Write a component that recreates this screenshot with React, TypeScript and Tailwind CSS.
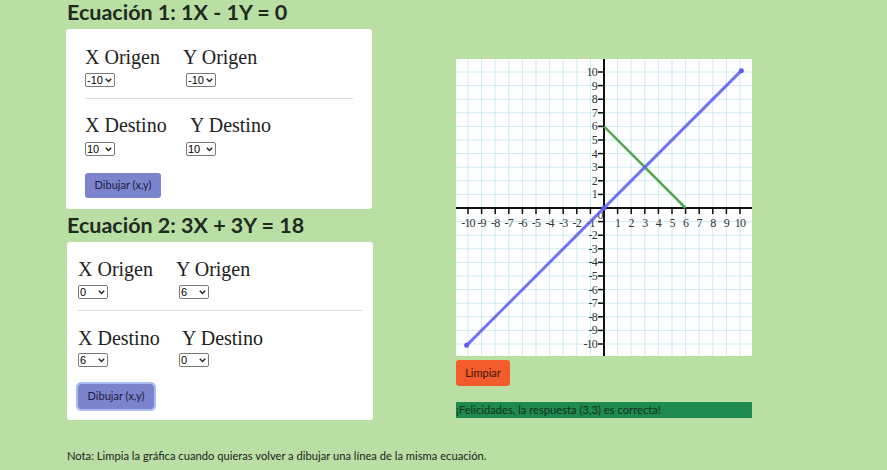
import React from 'react';

// Valores disponibles en los selects (-10 .. 10)
const values = Array.from({ length: 21 }, (_, i) => i - 10);

interface Ecuacion {
  xo: number;
  yo: number;
  xd: number;
  yd: number;
}

const NumSelect: React.FC<{ value: number }> = ({ value }) => (
  <div className="relative w-[30px] h-[14px]">
    <select
      defaultValue={value}
      className="appearance-none block w-[30px] h-[14px] border border-[#7a7a7a] rounded-[2px] bg-white text-[11px] leading-[12px] text-black font-['Liberation_Sans',sans-serif] pl-[1px] pr-[10px] py-0"
    >
      {values.map((v) => (
        <option key={v} value={v}>
          {v}
        </option>
      ))}
    </select>
    {/* flecha del select */}
    <svg width="7" height="5" viewBox="0 0 7 5" className="absolute right-[3px] top-[5px] pointer-events-none">
      <polyline points="0.8,0.8 3.5,3.6 6.2,0.8" fill="none" stroke="#222" strokeWidth="1.4" />
    </svg>
  </div>
);

const labelCls = "block text-[20px] leading-[22px] text-[#222] font-['Liberation_Serif',serif] whitespace-nowrap";

// Tarjeta con los selects de origen y destino
const Card: React.FC<{ eq: Ecuacion; second?: boolean }> = ({ eq, second }) => (
  <div
    className={`bg-white rounded-[3px] w-[306px] ${second ? 'px-[11px] pt-[16px] pb-[11px]' : 'px-[19px] pt-[17px] pb-[11px]'}`}
  >
    <div className="flex">
      <div className="w-[101px]">
        <span className={labelCls}>X Origen</span>
        <div className="mt-[5px]">
          <NumSelect value={eq.xo} />
        </div>
      </div>
      <div>
        <span className={`${labelCls} -ml-[3px]`}>Y Origen</span>
        <div className="mt-[5px]">
          <NumSelect value={eq.yo} />
        </div>
      </div>
    </div>
    <hr className="mt-[11px] border-t border-[#dcdcdc]" />
    <div className={`flex ${second ? 'mt-[16px]' : 'mt-[15px]'}`}>
      <div className="w-[101px]">
        <span className={labelCls}>X Destino</span>
        <div className={second ? 'mt-[4px]' : 'mt-[6px]'}>
          <NumSelect value={eq.xd} />
        </div>
      </div>
      <div>
        <span className={`${labelCls} ${second ? 'ml-[3px]' : 'ml-[4px]'}`}>Y Destino</span>
        <div className={second ? 'mt-[4px]' : 'mt-[6px]'}>
          <NumSelect value={eq.yd} />
        </div>
      </div>
    </div>
    <button
      type="button"
      className={`mt-[17px] w-[76px] h-[25px] rounded-[3px] bg-[#7b84cc] text-[11px] text-[#1e2040] ${second ? 'outline-2 outline-[#a9bdf2]' : ''}`}
    >
      Dibujar (x,y)
    </button>
  </div>
);

// Plano cartesiano
const W = 296;
const H = 297;
const OX = 148;
const OY = 149;
const S = 13.6;
const px = (x: number) => OX + x * S;
const py = (y: number) => OY - y * S;

const Grafica: React.FC = () => {
  const grid: number[] = [];
  for (let i = -11; i <= 11; i++) grid.push(i);
  const ticks = values.filter((v) => v !== 0);

  return (
    <svg width={W} height={H} className="block bg-white">
      {grid.map((i) => (
        <line key={'v' + i} x1={px(i)} y1={0} x2={px(i)} y2={H} stroke="#cdecf0" strokeWidth={1} />
      ))}
      {grid.map((i) => (
        <line key={'h' + i} x1={0} y1={py(i)} x2={W} y2={py(i)} stroke="#cdecf0" strokeWidth={1} />
      ))}

      {/* ejes */}
      <line x1={0} y1={OY} x2={W} y2={OY} stroke="#111" strokeWidth={2} />
      <line x1={OX} y1={0} x2={OX} y2={H} stroke="#111" strokeWidth={2} />

      {ticks.map((t) => (
        <line key={'tx' + t} x1={px(t)} y1={OY} x2={px(t)} y2={OY + 6} stroke="#111" strokeWidth={1.5} />
      ))}
      {ticks.map((t) => (
        <line key={'ty' + t} x1={OX - 6} y1={py(t)} x2={OX} y2={py(t)} stroke="#111" strokeWidth={1.5} />
      ))}

      <g fontFamily="'Liberation Serif', serif" fontSize={12} fill="#333" letterSpacing={-0.8}>
        {ticks.map((t) => (
          <text key={'lx' + t} x={px(t)} y={OY + 19} textAnchor="middle">
            {t}
          </text>
        ))}
        {ticks
          .filter((t) => t !== -1)
          .map((t) => (
            <text key={'ly' + t} x={OX - 7} y={py(t) + 4} textAnchor="end">
              {t}
            </text>
          ))}
        <text x={OX - 4} y={OY + 11} textAnchor="middle">
          0
        </text>
      </g>

      {/* rectas */}
      <line x1={px(0)} y1={py(6)} x2={px(6)} y2={py(0)} stroke="#52a84f" strokeWidth={2.5} />
      <line x1={px(-10.1)} y1={py(-10.1)} x2={px(10.1)} y2={py(10.1)} stroke="#5b5cf2" strokeWidth={3} strokeLinecap="round" opacity={0.85} />
      <circle cx={px(-10.1)} cy={py(-10.1)} r={2.5} fill="#5b5cf2" />
      <circle cx={px(10.1)} cy={py(10.1)} r={2.5} fill="#5b5cf2" />
      <circle cx={px(0)} cy={py(0)} r={2.5} fill="#5b5cf2" />
    </svg>
  );
};

const App: React.FC = () => {
  const eq1: Ecuacion = { xo: -10, yo: -10, xd: 10, yd: 10 };
  const eq2: Ecuacion = { xo: 0, yo: 6, xd: 6, yd: 0 };

  return (
    <div className="w-full h-[470px] bg-[#b9dfa4] overflow-hidden font-['Lato',sans-serif] text-[#222]">
      <div className="flex pl-[66px]">
        {/* columna izquierda */}
        <div className="w-[307px]">
          <h2 className="text-[21.5px] leading-[24px] font-bold text-[#1f2a1f] pl-[1px]">Ecuación 1: 1X - 1Y = 0</h2>
          <div className="mt-[5px]">
            <Card eq={eq1} />
          </div>
          <h2 className="mt-[4px] text-[21.5px] leading-[24px] font-bold text-[#1f2a1f] pl-[1px]">Ecuación 2: 3X + 3Y = 18</h2>
          <div className="mt-[5px] pl-[1px]">
            <Card eq={eq2} second />
          </div>
        </div>

        {/* columna derecha */}
        <div className="ml-[83px] pt-[59px] w-[296px]">
          <Grafica />
          <button
            type="button"
            className="mt-[4px] w-[54px] h-[26px] rounded-[3px] bg-[#f25c2d] text-[11px] text-[#3a1208]"
          >
            Limpiar
          </button>
          <div className="mt-[16px] h-[16px] bg-[#1f8a4f] text-[11.2px] leading-[16px] text-[#10301c] whitespace-nowrap">
            ¡Felicidades, la respuesta (3,3) es correcta!
          </div>
        </div>
      </div>

      <p className="mt-[28px] pl-[67px] text-[11.2px] leading-[16px] text-[#222]">
        Nota: Limpia la gráfica cuando quieras volver a dibujar una línea de la misma ecuación.
      </p>
    </div>
  );
};

export default App;
